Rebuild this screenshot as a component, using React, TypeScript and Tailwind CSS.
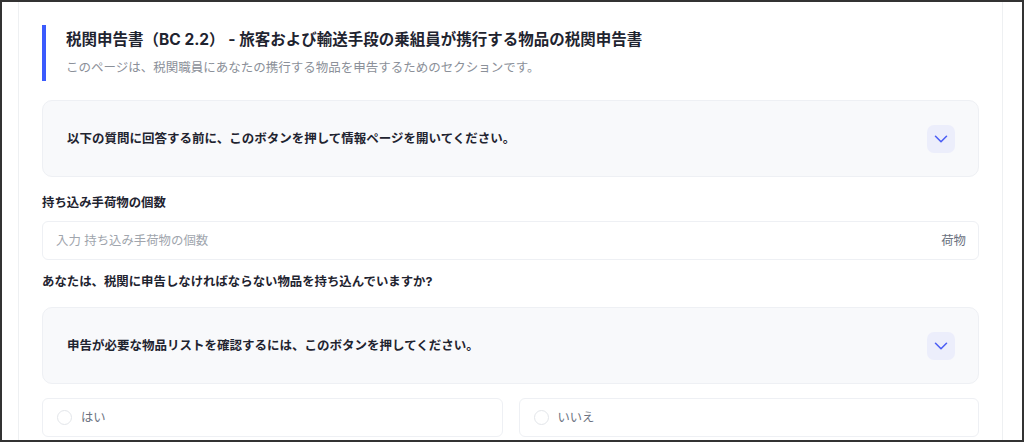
import { ChevronDown } from "lucide-react";

const font = { fontFamily: '"Inter", "Noto Sans CJK JP", sans-serif' };

const InfoCard = ({ text }: { text: string }) => (
  <div className="flex h-[77px] items-center justify-between rounded-[10px] border border-[#eef0f4] bg-[#f8f9fb] pl-[24px] pr-[23px]">
    <span className="text-[12.5px] font-bold leading-[18px] text-[#1f2430]">{text}</span>
    <button className="flex h-[28px] w-[28px] items-center justify-center rounded-[7px] bg-[#eceefb] text-[#4b5ef5]">
      <ChevronDown className="h-[22px] w-[22px]" strokeWidth={1.7} />
    </button>
  </div>
);

const Radio = ({ label }: { label: string }) => (
  <label className="flex h-[39px] flex-1 items-center gap-[9px] rounded-[6px] border border-[#eef0f4] bg-white pl-[14px]">
    <span className="h-[15px] w-[15px] rounded-full border border-[#e3e6ea] bg-white" />
    <span className="text-[12.3px] leading-[18px] text-[#6b7280]">{label}</span>
  </label>
);

export default function App() {
  return (
    <div className="h-[442px] w-[1024px] overflow-hidden border-2 border-[#333333] bg-white" style={font}>
      <div className="ml-[16px] h-full w-[985px] border-x border-[#eef0f2] px-[23px] pt-[23px]">
        <div className="flex h-[56px] flex-col border-l-[4px] border-[#3b5bfd] pl-[20px]">
          <h1 className="pt-[3px] text-[15.5px] font-bold leading-[24px] text-[#1f2430]">
            税関申告書（BC 2.2） - 旅客および輸送手段の乗組員が携行する物品の税関申告書
          </h1>
          <p className="mt-[7px] text-[12.5px] leading-[18px] text-[#8b9099]">
            このページは、税関職員にあなたの携行する物品を申告するためのセクションです。
          </p>
        </div>

        <div className="mt-[19px]">
          <InfoCard text="以下の質問に回答する前に、このボタンを押して情報ページを開いてください。" />
        </div>

        <div className="mt-[17px] text-[12.4px] font-bold leading-[18px] text-[#1f2430]">持ち込み手荷物の個数</div>
        <div className="mt-[9px] flex h-[39px] items-center justify-between rounded-[6px] border border-[#eef0f4] bg-white pl-[13px] pr-[12px]">
          <span className="text-[12.4px] leading-[18px] text-[#a0a5ad]">入力 持ち込み手荷物の個数</span>
          <span className="text-[12.4px] leading-[18px] text-[#6b7280]">荷物</span>
        </div>

        <div className="mt-[13px] text-[12.4px] font-bold leading-[18px] text-[#1f2430]">
          あなたは、税関に申告しなければならない物品を持ち込んでいますか?
        </div>

        <div className="mt-[16px]">
          <InfoCard text="申告が必要な物品リストを確認するには、このボタンを押してください。" />
        </div>

        <div className="mt-[14px] flex gap-[16px]">
          <Radio label="はい" />
          <Radio label="いいえ" />
        </div>
      </div>
    </div>
  );
}
